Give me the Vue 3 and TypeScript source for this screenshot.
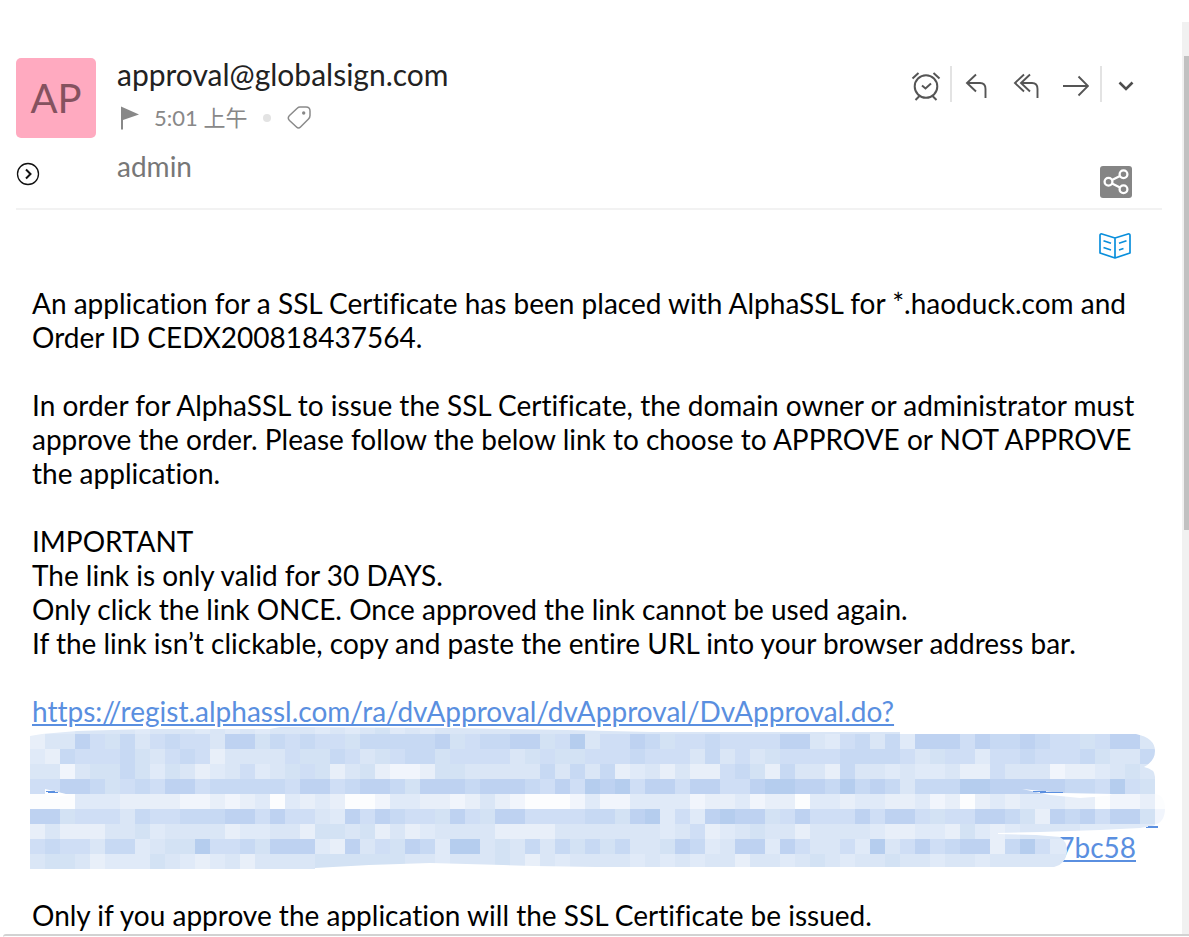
<script setup lang="ts">
interface Cell { x: number; y: number; h: number; fill: string }

const palette: string[] = [
  '#fcfdfe', '#f1f5fc', '#e8eff9', '#e0eaf8', '#dae6f6',
  '#d3e2f4', '#cfdef5', '#c7d9f3', '#bed2f1', '#b5cdee',
]

const rows: string[] = [
  '3334444344434343444343453' + '43444444444444444444444444' + '4444444444444444444444444',
  '2448657467664885767665777' + '77856778856946687566766668' + '8436747388868778766568843',
  '3276667546762444465576456' + '77566664565566676664746456' + '6667777645663667666754473',
  '4414557535423463456524521' + '12554444474747234242267527' + '4427443433422644412234542',
  '6688756768867777768867887' + '58887888768698968868866899' + '8879787477799888887769652',
  '0003332222112123032320013' + '32212421000131133331223122' + '0332332231202323332201120',
  '8856664766777886866438687' + '66586588666677589363898856' + '8666868865668875287868851',
  '2422244534444233442554524' + '23444422224444444346234544' + '2444432233253234444333330',
  '6766477345596675888328465' + '87399454747575744587348838' + '6446394686788279633333333',
  '4554233354323424444555555' + '44344454243444434343442443' + '4543445443443444444444444',
]

const cells: Cell[] = rows.flatMap((row, r) =>
  [...row].map((level, c) => ({
    x: c * 15,
    y: r === 0 ? 0 : r * 15 - 8,
    h: r === 0 ? 7 : 15,
    fill: palette[Number(level)],
  })),
)
</script>

<template>
  <div class="window">
    <div class="pane">
      <main class="mail">
        <header class="head">
          <div class="avatar">AP</div>
          <div class="who">
            <h1 class="sender">approval@globalsign.com</h1>
            <div class="meta">
              <button class="icon" type="button" aria-label="Flag">
                <svg width="20" height="24" viewBox="0 0 20 24"><path d="M1 0.500L19 8.500L3 14V23.500H1Z" fill="#888" /></svg>
              </button>
              <time class="time">5:01 上午</time>
              <span class="dot"></span>
              <button class="icon" type="button" aria-label="Tag">
                <svg width="24" height="24" viewBox="0 0 24 24" fill="none" stroke="#8a8a8a" stroke-width="1.500">
                  <path d="M10.500 2Q11.500 1 13 1H19Q23 1 23 5V9.500Q23 11.500 21.500 13L13.500 21Q11.500 23 9.500 21L2.500 14.500Q0 12 2.500 9.500Z" />
                  <circle cx="16.700" cy="7" r="1.700" fill="#888" stroke="none" />
                </svg>
              </button>
            </div>
          </div>
          <nav class="tools" aria-label="Message actions">
            <button class="icon tool" type="button" aria-label="Snooze">
              <svg width="30" height="30" viewBox="0 0 30 30" fill="none" stroke="#555" stroke-width="2">
                <circle cx="15" cy="15.500" r="11.300" />
                <path d="M11 14.500L14.500 17.500L20 12.500M1.500 7.500L7.500 2M22.500 2L28.500 7.500M8.500 25L4.500 29M21.500 25L25.500 29" />
              </svg>
            </button>
            <span class="split"></span>
            <button class="icon tool" type="button" aria-label="Reply">
              <svg width="24" height="26" viewBox="0 0 24 26" fill="none" stroke="#555" stroke-width="1.900">
                <path d="M12 1.500L3 10L12 18.500M3 10H16Q21.500 10 21.500 16V25" />
              </svg>
            </button>
            <button class="icon tool" type="button" aria-label="Reply all">
              <svg width="26" height="26" viewBox="0 0 26 26" fill="none" stroke="#555" stroke-width="1.900">
                <path d="M11 1.500L2 10L11 18.500M17 1.500L8 10L17 18.500M8 10H19Q24.500 10 24.500 16V25" />
              </svg>
            </button>
            <button class="icon tool" type="button" aria-label="Forward">
              <svg width="26" height="22" viewBox="0 0 26 22" fill="none" stroke="#555" stroke-width="1.900">
                <path d="M0 11H25M15.500 1.500L25 11L15.500 20.500" />
              </svg>
            </button>
            <span class="split"></span>
            <button class="icon tool" type="button" aria-label="More">
              <svg width="16" height="10" viewBox="0 0 16 10" fill="none" stroke="#4d4d4d" stroke-width="2.600">
                <path d="M1.500 1.500L8 8L14.500 1.500" />
              </svg>
            </button>
          </nav>
        </header>

        <div class="recipients">
          <button class="icon expand" type="button" aria-label="Show details">
            <svg width="24" height="24" viewBox="0 0 24 24" fill="none" stroke="#111">
              <circle cx="12" cy="12" r="10.500" stroke-width="1.300" />
              <path d="M10 7.500L14.500 12L10 16.500" stroke-width="2" />
            </svg>
          </button>
          <span class="to">admin</span>
          <button class="icon share" type="button" aria-label="Share">
            <svg width="32" height="32" viewBox="0 0 32 32" fill="none" stroke="#fff" stroke-width="2.300">
              <rect width="32" height="32" rx="3" fill="#858585" stroke="none" />
              <path d="M12 14L20 10M12 17.500L20 21.500" />
              <circle cx="8.500" cy="15.700" r="3.900" />
              <circle cx="23.500" cy="8.300" r="3.900" />
              <circle cx="23.500" cy="23.200" r="3.900" />
            </svg>
          </button>
        </div>

        <div class="reader">
          <button class="icon" type="button" aria-label="Reading view">
            <svg width="32" height="26" viewBox="0 0 32 26" fill="none" stroke="#0a8fdc" stroke-width="1.700" stroke-linejoin="round">
              <path d="M16 5L3 1Q1 0.500 1 2.500V20L16 25L31 20V2.500Q31 0.500 29 1ZM16 5V25M4.500 7.800L12 10.300M4.500 14.500L12 17M20 10.300L27.500 7.800M20 17L24.500 15.500" />
            </svg>
          </button>
        </div>

        <article class="body">
          <p>An application for a SSL Certificate has been placed with AlphaSSL for *.haoduck.com and Order ID CEDX200818437564.</p>
          <p>In order for AlphaSSL to issue the SSL Certificate, the domain owner or administrator must approve the order. Please follow the below link to choose to APPROVE or NOT APPROVE the application.</p>
          <p>
            IMPORTANT<br />
            The link is only valid for 30 DAYS.<br />
            Only click the link ONCE. Once approved the link cannot be used again.<br />
            If the link isn’t clickable, copy and paste the entire URL into your browser address bar.
          </p>
          <p class="approval">
            <a href="#">https://regist.alphassl.com/ra/dvApproval/dvApproval/DvApproval.do?</a>
            <a class="tail" href="#">7bc58</a>
            <svg class="mosaic" viewBox="0 0 1135 142" aria-hidden="true">
              <clipPath id="smear">
                <path d="M0 9L12 7L47 4L117 2H240L250 0L420 1L537 3L621 5H870V7H1106Q1125 11 1125 24Q1125 34 1114 40Q1125 42 1125 50V67Q1135 68 1135 82Q1135 96 1122 99L1110 101L1070 103L1010 105L968 106V107L1006 108L1030 110Q1037 114 1037 124Q1036 137 1024 140H566L504 139L473 138L400 136L370 137L339 138L285 141V142H0Z" />
              </clipPath>
              <g clip-path="url(#smear)" shape-rendering="crispEdges">
                <rect v-for="(cell, i) in cells" :key="i" :x="cell.x" :y="cell.y" width="15" :height="cell.h" :fill="cell.fill" />
              </g>
              <path d="M15 62L28 65L40 68L25 70L15 67ZM992 62L1012 64L1032 66L1082 67L1077 69L1050 71L1020 68Z" fill="#fff" />
              <path d="M16 64H25V65H28V66H18V65H16ZM1003 64H1016V65H1033V66H1010V65H1003ZM1118 99H1128V101H1116V100H1118Z" fill="#5a8fe0" />
            </svg>
          </p>
          <p>Only if you approve the application will the SSL Certificate be issued.</p>
        </article>
      </main>
      <div class="track"><div class="thumb"></div></div>
    </div>
    <div class="edge"></div>
  </div>
</template>

<style>
body {
  margin: 0;
  background: #fff;
}
</style>

<style scoped>
.window {
  height: 100vh;
  overflow: hidden;
  display: flex;
  flex-direction: column;
  font-family: "Lato", "Noto Sans CJK SC", sans-serif;
  font-variant-ligatures: no-common-ligatures;
  color: #000;
}
.pane {
  flex: 1;
  min-height: 0;
  display: flex;
}
.mail {
  flex: 1;
  min-width: 0;
  overflow: hidden;
  padding: 58px 20px 0 16px;
}
.track {
  width: 5px;
  margin-top: 22px;
  padding: 34px 0 0 2px;
  background: #f1f1f1;
}
.thumb {
  height: 54%;
  background: #c1c1c1;
}
.edge {
  height: 3px;
  margin-left: 3px;
  box-sizing: border-box;
  border-top: 2px solid #d2d2d2;
  border-top-left-radius: 4px;
}
.icon {
  display: flex;
  align-items: center;
  justify-content: center;
  padding: 0;
  border: 0;
  background: none;
}
.icon svg {
  display: block;
}
.head {
  display: flex;
  height: 80px;
}
.avatar {
  width: 80px;
  height: 80px;
  border-radius: 5px;
  background: #ffaac0;
  color: #85525f;
  font-size: 40px;
  line-height: 80px;
  text-align: center;
}
.who {
  flex: 1;
  padding-left: 21px;
}
.sender {
  margin: 0;
  font-size: 30px;
  font-weight: 400;
  line-height: 32px;
  color: #222;
}
.meta {
  display: flex;
  align-items: center;
  height: 32px;
  margin-top: 12px;
  padding-left: 3px;
}
.time {
  margin-left: 14px;
  font-size: 22px;
  line-height: 32px;
  color: #888;
}
.dot {
  width: 8px;
  height: 8px;
  margin: 0 16px;
  border-radius: 50%;
  background: #e3e3e3;
}
.tools {
  display: flex;
  align-items: center;
  height: 36px;
  margin-top: 8px;
  padding-right: 11px;
}
.tool {
  width: 50px;
  height: 36px;
  padding-top: 4px;
}
.split {
  width: 2px;
  height: 36px;
  margin: 0 -1px;
  background: #e3e3e3;
}
.recipients {
  display: flex;
  height: 70px;
  border-bottom: 2px solid #f2f2f2;
}
.expand {
  width: 24px;
  height: 24px;
  margin-top: 24px;
}
.to {
  flex: 1;
  margin: 11px 0 0 77px;
  font-size: 28px;
  line-height: 34px;
  color: #777;
}
.share {
  height: 32px;
  margin: 28px 30px 0 0;
}
.reader {
  display: flex;
  justify-content: flex-end;
  padding: 23px 31px 27px 0;
}
.body {
  padding: 0 16px;
  font-size: 28px;
  line-height: 34px;
}
.body p {
  margin: 0 0 34px;
}
.body a {
  color: #5a8fe0;
  text-decoration: underline;
}
.body .approval {
  position: relative;
  height: 170px;
  display: flex;
  flex-direction: column;
  justify-content: space-between;
}
.approval a {
  align-self: flex-start;
}
.approval .tail {
  align-self: flex-end;
  margin-right: 10px;
}
.mosaic {
  position: absolute;
  left: -2px;
  top: 33px;
  width: calc(100% + 21px);
}
</style>
